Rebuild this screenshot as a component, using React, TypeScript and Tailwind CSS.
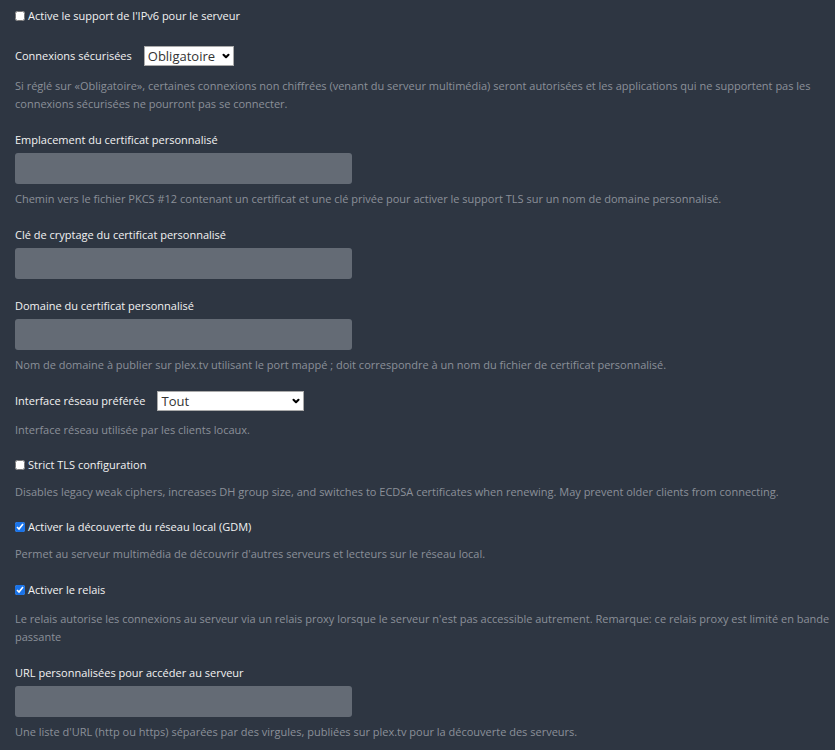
import { ChevronDown } from "lucide-react";

function Help({ children }: { children: React.ReactNode }) {
  return <p className="text-[11px] leading-[18px] text-[#8b9099]">{children}</p>;
}

function Label({ children }: { children: React.ReactNode }) {
  return <div className="text-[11px] leading-[18px] font-normal text-[#f2f2f2]">{children}</div>;
}

function Check({ label, checked }: { label: string; checked?: boolean }) {
  return (
    <label className="flex items-center gap-[3px] h-[18px] text-[11px] text-[#f2f2f2]">
      <input type="checkbox" defaultChecked={checked} className="m-0 w-[10px] h-[10px] accent-[#1a73e8]" />
      {label}
    </label>
  );
}

function Field() {
  return <input type="text" className="block w-[337px] h-[31px] rounded-[3px] bg-[#646b75] outline-none" />;
}

function Select({ value, options, width }: { value: string; options: string[]; width: string }) {
  return (
    <div className={`relative h-[20px] ${width}`}>
      <select
        defaultValue={value}
        className="block appearance-none w-full h-full bg-white border border-[#aaa] pl-[3px] text-[13px] leading-[18px] text-[#333] outline-none"
      >
        {options.map((o) => (
          <option key={o}>{o}</option>
        ))}
      </select>
      <ChevronDown className="absolute right-[3px] top-[5px] w-[10px] h-[10px] text-black pointer-events-none" strokeWidth={5} />
    </div>
  );
}

export default function App() {
  return (
    <div
      className="min-h-[750px] bg-[#2e3642] pl-[15px] pr-[5px] pt-[7px] pb-4"
      style={{ fontFamily: '"Open Sans", "Liberation Sans", sans-serif' }}
    >
      <Check label="Active le support de l'IPv6 pour le serveur" />

      <div className="mt-[21px] flex items-center gap-[12px]">
        <Label>Connexions sécurisées</Label>
        <Select value="Obligatoire" options={["Obligatoire", "Préférée", "Désactivé"]} width="w-[90px]" />
      </div>
      <div className="mt-[11px]">
        <Help>
          Si réglé sur «Obligatoire», certaines connexions non chiffrées (venant du serveur multimédia) seront
          autorisées et les applications qui ne supportent pas les connexions sécurisées ne pourront pas se connecter.
        </Help>
      </div>

      <div className="mt-[18px]">
        <Label>Emplacement du certificat personnalisé</Label>
        <div className="mt-[4px]">
          <Field />
        </div>
        <div className="mt-[6px]">
          <Help>
            Chemin vers le fichier PKCS #12 contenant un certificat et une clé privée pour activer le support TLS sur
            un nom de domaine personnalisé.
          </Help>
        </div>
      </div>

      <div className="mt-[18px]">
        <Label>Clé de cryptage du certificat personnalisé</Label>
        <div className="mt-[4px]">
          <Field />
        </div>
      </div>

      <div className="mt-[18px]">
        <Label>Domaine du certificat personnalisé</Label>
        <div className="mt-[4px]">
          <Field />
        </div>
        <div className="mt-[6px]">
          <Help>
            Nom de domaine à publier sur plex.tv utilisant le port mappé ; doit correspondre à un nom du fichier de
            certificat personnalisé.
          </Help>
        </div>
      </div>

      <div className="mt-[17px] flex items-center gap-[12px]">
        <Label>Interface réseau préférée</Label>
        <Select value="Tout" options={["Tout"]} width="w-[147px]" />
      </div>
      <div className="mt-[10px]">
        <Help>Interface réseau utilisée par les clients locaux.</Help>
      </div>

      <div className="mt-[17px]">
        <Check label="Strict TLS configuration" />
        <div className="mt-[9px]">
          <Help>
            Disables legacy weak ciphers, increases DH group size, and switches to ECDSA certificates when renewing.
            May prevent older clients from connecting.
          </Help>
        </div>
      </div>

      <div className="mt-[17px]">
        <Check label="Activer la découverte du réseau local (GDM)" checked />
        <div className="mt-[9px]">
          <Help>Permet au serveur multimédia de découvrir d'autres serveurs et lecteurs sur le réseau local.</Help>
        </div>
      </div>

      <div className="mt-[18px]">
        <Check label="Activer le relais" checked />
        <div className="mt-[11px]">
          <Help>
            Le relais autorise les connexions au serveur via un relais proxy lorsque le serveur n'est pas accessible
            autrement. Remarque: ce relais proxy est limité en bande passante
          </Help>
        </div>
      </div>

      <div className="mt-[18px]">
        <Label>URL personnalisées pour accéder au serveur</Label>
        <div className="mt-[4px]">
          <Field />
        </div>
        <div className="mt-[6px]">
          <Help>
            Une liste d'URL (http ou https) séparées par des virgules, publiées sur plex.tv pour la découverte des
            serveurs.
          </Help>
        </div>
      </div>
    </div>
  );
}
